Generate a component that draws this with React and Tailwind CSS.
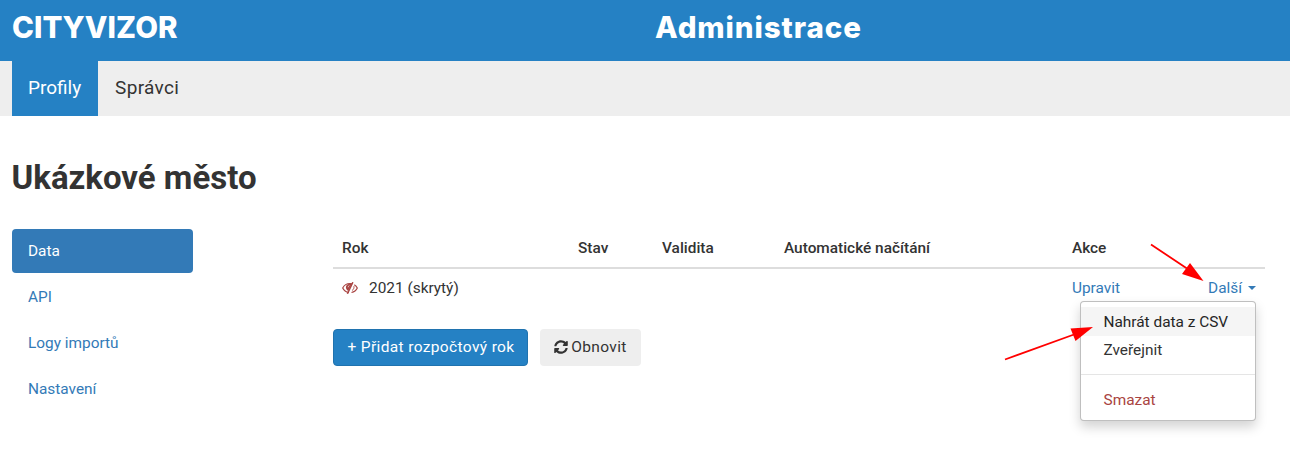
import { FaSyncAlt } from "react-icons/fa";

const sideLinks = ["API", "Logy importů", "Nastavení"];

function HiddenEye() {
  return (
    <svg viewBox="0 0 16 12" className="h-3 w-4 shrink-0" fill="none" stroke="#a94442">
      <path d="M6.8 10.5C4 10.1 1.7 8.2.7 6 2 3.4 5 1.500 8 1.500c.7 0 1.400.1 2 .3M12.300 2.700C13.700 3.500 14.700 4.700 15.300 6c-1 2.200-3.300 4-5.800 4.500" strokeWidth="1.200" />
      <path d="M10.900.2 5.400 11.800" strokeWidth="1.500" />
      <path d="M9.600 2C6.500 1.400 3.700 3 3.900 5.500c.1 1.500 1 2.800 2.300 3.500z" fill="#a94442" stroke="none" />
      <path d="M11.900 4.200c.3 1.700-.3 3.300-1.700 4.200" strokeWidth="1" />
      <path d="M6.100 5.300c0-1 .6-1.700 1.400-1.900" stroke="#fff" strokeWidth=".6" />
    </svg>
  );
}

export default function App() {
  return (
    <div className="relative h-[454px] w-[1290px] overflow-hidden bg-white font-['Roboto',sans-serif] text-[15.4px] leading-5 text-[#333]">
      <header className="grid h-[61px] grid-cols-[643px_1fr] bg-[#2581c4] px-3 pt-[9px] font-['Inter',sans-serif] text-[29.5px] leading-9 font-extrabold text-white">
        <span className="tracking-[0.05px]">CITYVIZOR</span>
        <span className="tracking-[0.9px]">Administrace</span>
      </header>
      <nav className="flex h-[55px] bg-[#eee] pl-3 text-[19px] leading-[54px]">
        <a className="w-[86px] bg-[#2581c4] pl-4 text-white">Profily</a>
        <a className="pl-[17px] tracking-[0.35px]">Správci</a>
      </nav>
      <h1 className="mt-[43px] ml-[11.5px] h-[70px] text-[33px] leading-[38px] font-bold">Ukázkové město</h1>
      <main className="flex pl-3">
        <aside className="flex w-[181px] flex-col gap-0.5 text-[#337ab7]">
          <a className="h-11 rounded bg-[#337ab7] px-4 leading-[44px] text-white">Data</a>
          {sideLinks.map((l) => (
            <a key={l} className="h-11 px-4 leading-[44px]">{l}</a>
          ))}
        </aside>
        <section className="ml-[140px] w-[932px]">
          <div className="grid h-10 grid-cols-[236px_84px_122px_288px_1fr] border-b-2 border-[#ddd] pt-[9px] pl-[9px] font-medium">
            <span>Rok</span>
            <span>Stav</span>
            <span>Validita</span>
            <span>Automatické načítání</span>
            <span>Akce</span>
          </div>
          <div className="flex h-[60px] pt-[9px] pr-[9px] pl-[9px]">
            <div className="flex h-5 w-[730px] items-center gap-[11px]">
              <HiddenEye />
              <span>2021 (skrytý)</span>
            </div>
            <a className="text-[#337ab7]">Upravit</a>
            <a className="ml-auto flex h-5 items-center gap-1.5 text-[#337ab7]">
              Další
              <svg viewBox="0 0 8 4" className="h-1 w-2" fill="currentColor"><path d="M0 0h8L4 4z" /></svg>
            </a>
          </div>
          <div className="flex gap-3 text-[15.5px]">
            <button className="flex h-[37px] w-[195px] items-center justify-center rounded border border-[#2073af] bg-[#2581c4] pb-0.5 pl-px tracking-[0.36px] whitespace-nowrap text-white">+ Přidat rozpočtový rok</button>
            <button className="flex h-[37px] w-[101px] items-center justify-center gap-[3px] rounded bg-[#eee] pb-0.5 tracking-[0.36px]">
              <FaSyncAlt className="size-[14px]" />
              Obnovit
            </button>
          </div>
        </section>
      </main>
      <div className="absolute top-[301px] left-[1080px] flex h-[120px] w-[176px] flex-col rounded border border-black/25 bg-white pt-[5px] shadow-[0_6px_12px_rgba(0,0,0,0.175)]">
        <a className="h-[29px] bg-[#f5f5f5] pl-[22.5px] leading-[30px] text-[#262626]">Nahrát data z CSV</a>
        <a className="h-7 pl-[22.5px] leading-7">Zveřejnit</a>
        <hr className="mt-[10px] border-[#e5e5e5]" />
        <a className="mt-[11px] h-7 pl-[22.5px] leading-7 text-[#a94442]">Smazat</a>
      </div>
      <svg viewBox="0 0 1290 454" className="pointer-events-none absolute inset-0 h-full w-full" fill="#f00" stroke="#f00">
        <path d="M1151 244.500 1187 268.500M1005 359.500 1074 334.500" strokeWidth="1.800" />
        <path d="m1203.500 281-21.500-7 8-11zM1093 327l-17.500 14-5-12.500z" stroke="none" />
      </svg>
    </div>
  );
}
